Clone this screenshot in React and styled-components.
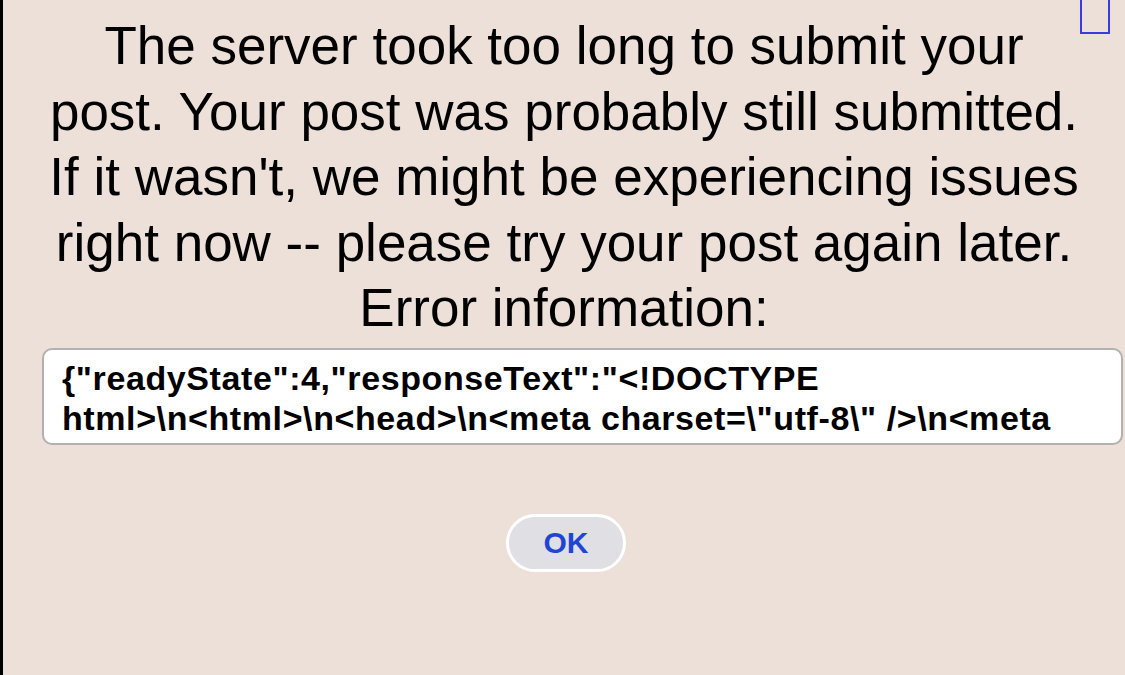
import styled, { createGlobalStyle } from 'styled-components';

const GlobalStyle = createGlobalStyle`
  html, body {
    margin: 0;
    padding: 0;
    background: #ece0d8;
  }
  #root {
    min-height: 100vh;
  }
`;

const Page = styled.main`
  position: relative;
  box-sizing: border-box;
  min-height: 675px;
  border-left: 3px solid #000;
  background: #ece0d8;
  padding-top: 13px;
  display: flex;
  flex-direction: column;
  font-family: 'Liberation Sans', Arial, sans-serif;
  color: #000;
`;

const Message = styled.p`
  margin: 0 auto;
  width: 1042px;
  text-align: center;
  font-size: 53px;
  line-height: 65.6px;
`;

const ErrorBox = styled.div`
  box-sizing: border-box;
  margin: 7px 2px 0 39px;
  height: 97px;
  padding: 8px 10px 0 18px;
  background: #fff;
  border: 2px solid #b3b1b0;
  border-radius: 10px;
  overflow: hidden;
  font-size: 34px;
  font-weight: bold;
  line-height: 40px;
  letter-spacing: 0.6px;
`;

const Actions = styled.div`
  display: flex;
  justify-content: center;
  padding-top: 69px;
  padding-left: 4px;
`;

const OkButton = styled.button`
  box-sizing: border-box;
  width: 120px;
  height: 58px;
  border: 3px solid #fff;
  border-radius: 29px;
  background: #e0dfe4;
  color: #1f45d4;
  font-family: 'Liberation Sans', Arial, sans-serif;
  font-weight: bold;
  font-size: 30px;
  cursor: pointer;
`;

const CornerMarker = styled.div`
  position: absolute;
  top: -2px;
  left: 1077px;
  width: 30px;
  height: 36px;
  box-sizing: border-box;
  border: 2px solid #3a3ae0;
`;

const errorText =
  '{"readyState":4,"responseText":"<!DOCTYPE html>\\n<html>\\n<head>\\n<meta charset=\\"utf-8\\" />\\n<meta';

export default function App() {
  return (
    <>
      <GlobalStyle />
      <Page>
        <CornerMarker />
        <Message>
          The server took too long to submit your post. Your post was probably
          still submitted. If it wasn't, we might be experiencing issues right
          now -- please try your post again later.
          <br />
          Error information:
        </Message>
        <ErrorBox>{errorText}</ErrorBox>
        <Actions>
          <OkButton type="button">OK</OkButton>
        </Actions>
      </Page>
    </>
  );
}
